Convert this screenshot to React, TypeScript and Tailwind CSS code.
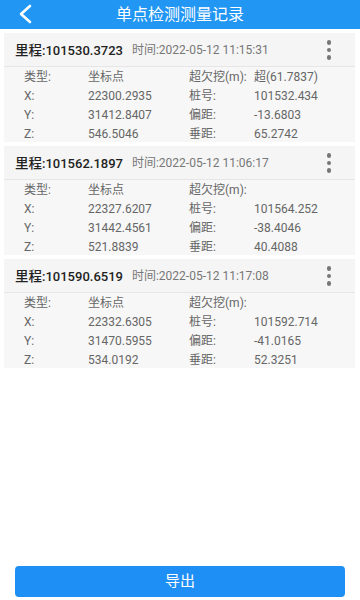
import React from "react";

type Rec = {
  mileage: string;
  time: string;
  over: string;
  x: string;
  y: string;
  z: string;
  stake: string;
  offset: string;
  vert: string;
};

const records: Rec[] = [
  { mileage: "101530.3723", time: "2022-05-12 11:15:31", over: "超(61.7837)", x: "22300.2935", y: "31412.8407", z: "546.5046", stake: "101532.434", offset: "-13.6803", vert: "65.2742" },
  { mileage: "101562.1897", time: "2022-05-12 11:06:17", over: "", x: "22327.6207", y: "31442.4561", z: "521.8839", stake: "101564.252", offset: "-38.4046", vert: "40.4088" },
  { mileage: "101590.6519", time: "2022-05-12 11:17:08", over: "", x: "22332.6305", y: "31470.5955", z: "534.0192", stake: "101592.714", offset: "-41.0165", vert: "52.3251" },
];

function Row({ a, b, c, d }: { a: string; b: string; c: string; d: string }) {
  return (
    <div className="flex h-[19px] items-center text-[12px] text-[#666]">
      <div className="w-[64px] pl-[20px] shrink-0 box-content">{a}</div>
      <div className="w-[101px] shrink-0">{b}</div>
      <div className="w-[65px] shrink-0 whitespace-nowrap">{c}</div>
      <div className="whitespace-nowrap">{d}</div>
    </div>
  );
}

function Card({ r }: { r: Rec }) {
  return (
    <div className="bg-[#f5f5f5] mx-[4px] w-[351px]">
      <div className="flex h-[34px] items-center border-b border-[#e6e6e6] pl-[11px] pr-[24px] pt-[1px]">
        <span className="text-[13px] font-medium text-[#222]">
          <span className="text-[13.5px]">里程</span>:{r.mileage}
        </span>
        <span className="ml-[9px] text-[12px] text-[#777]">时间:{r.time}</span>
        <div className="ml-auto flex flex-col items-center gap-[3px]">
          <span className="block h-[4.5px] w-[4.5px] rounded-full bg-[#777]" />
          <span className="block h-[4.5px] w-[4.5px] rounded-full bg-[#777]" />
          <span className="block h-[4.5px] w-[4.5px] rounded-full bg-[#777]" />
        </div>
      </div>
      <div className="h-[75px] bg-[#f7f7f7]">
        <Row a="类型:" b="坐标点" c="超欠挖(m):" d={r.over} />
        <Row a="X:" b={r.x} c="桩号:" d={r.stake} />
        <Row a="Y:" b={r.y} c="偏距:" d={r.offset} />
        <Row a="Z:" b={r.z} c="垂距:" d={r.vert} />
      </div>
    </div>
  );
}

export default function App() {
  return (
    <div
      className="relative flex h-[600px] w-[360px] flex-col bg-white"
      style={{ fontFamily: 'Roboto, "Noto Sans CJK SC", sans-serif' }}
    >
      <div className="relative flex h-[29px] items-center justify-center bg-[#2196f3]">
        <svg className="absolute left-[17px] top-[4px]" width="16" height="20" viewBox="0 0 16 20">
          <path d="M13 2 L4 10 L13 18" fill="none" stroke="white" strokeWidth="2.6" strokeLinecap="round" strokeLinejoin="round" />
        </svg>
        <span className="text-[16px] text-white">单点检测测量记录</span>
      </div>
      <div className="mt-[4px] flex flex-col gap-[4px]">
        {records.map((r) => (
          <Card key={r.mileage} r={r} />
        ))}
      </div>
      <div className="mt-auto mb-[3px] px-[15px]">
        <button className="flex h-[31px] w-full items-center justify-center rounded-[4px] bg-[#1e8ff5] text-[15px] text-white">
          导出
        </button>
      </div>
    </div>
  );
}
